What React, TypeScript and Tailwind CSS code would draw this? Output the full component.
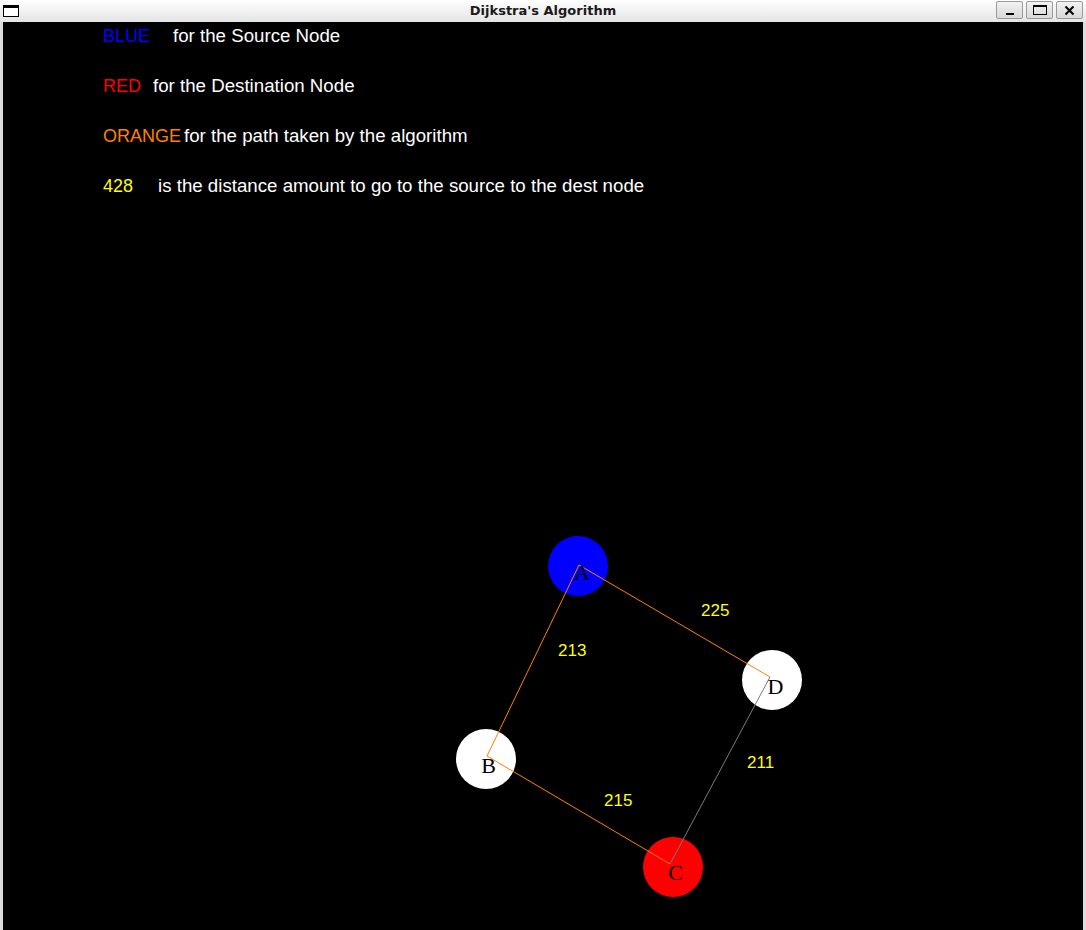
const nodes = [
  { id: "A", cx: 578, cy: 566, fill: "#0000ff", tx: 582, ty: 580 },
  { id: "B", cx: 486, cy: 759, fill: "#ffffff", tx: 488.5, ty: 773 },
  { id: "C", cx: 673, cy: 867, fill: "#ff0000", tx: 675.5, ty: 880 },
  { id: "D", cx: 772, cy: 680, fill: "#ffffff", tx: 775.5, ty: 694 },
];

// where the edges meet each node
const anchors: Record<string, [number, number]> = {
  A: [579, 565],
  B: [487, 756],
  C: [670, 864],
  D: [770, 677],
};

const edges = [
  { from: "A", to: "D", color: "#ff8000", label: "225", lx: 701, ly: 616 },
  { from: "A", to: "B", color: "#ff8000", label: "213", lx: 558, ly: 656 },
  { from: "B", to: "C", color: "#ff8000", label: "215", lx: 604, ly: 806 },
  { from: "D", to: "C", color: "#7a7a7a", label: "211", lx: 747, ly: 768 },
];

const legend = [
  { key: "BLUE", color: "text-[#0000ff]", width: "w-[70px]", text: "for the Source Node" },
  { key: "RED", color: "text-[#ff0000]", width: "w-[50px]", text: "for the Destination Node" },
  { key: "ORANGE", color: "text-[#ff8000]", width: "w-[81px]", text: "for the path taken by the algorithm" },
  { key: "428", color: "text-[#ffff00]", width: "w-[55px]", text: "is the distance amount to go to the source to the dest node" },
];

const TitleButton = ({ children }: { children: React.ReactNode }) => (
  <div className="w-[27px] h-[18px] border border-[#9a9a9a] rounded-[2px] bg-gradient-to-b from-[#f2f2f2] to-[#d9d9d9] flex items-center justify-center">
    {children}
  </div>
);

export default function App() {
  return (
    <div className="w-[1086px] h-[930px] flex flex-col bg-[#dcdcdc] overflow-hidden font-['Liberation_Sans',Arial,sans-serif]">
      <div className="h-[22px] shrink-0 relative flex items-center bg-gradient-to-b from-white to-[#e4e4e4]">
        <div className="ml-[3px] w-[16px] h-[12px] border border-black border-t-[3px] bg-white" />
        <div className="absolute inset-x-0 top-0 h-[22px] flex items-center justify-center text-[13px] font-bold text-[#1a1a1a] font-['DejaVu_Sans',sans-serif] pointer-events-none">
          Dijkstra's Algorithm
        </div>
        <div className="ml-auto mr-[3px] flex gap-[3px] self-start mt-[1px]">
          <TitleButton>
            <div className="w-[8px] h-[2px] bg-black mt-[8px]" />
          </TitleButton>
          <TitleButton>
            <div className="w-[14px] h-[10px] border border-black border-t-[2px]" />
          </TitleButton>
          <TitleButton>
            <svg width="11" height="11" viewBox="0 0 11 11">
              <path d="M1.5 1.5 L9.5 9.5 M9.5 1.5 L1.5 9.5" stroke="black" strokeWidth="2" />
            </svg>
          </TitleButton>
        </div>
      </div>

      <div className="flex-1 mx-[3px] bg-black relative">
        <div className="pt-[4px] pl-[100px] text-[18px] leading-[20px] text-white">
          {legend.map((row) => (
            <div key={row.key} className="h-[50px] flex whitespace-nowrap">
              <span className={`${row.color} ${row.width} shrink-0`}>{row.key}</span>
              <span className="text-[18.7px]">{row.text}</span>
            </div>
          ))}
        </div>

        <svg
          className="absolute inset-0"
          width="1080"
          height="908"
          viewBox="3 22 1080 908"
        >
          {nodes.map((n) => (
            <circle key={n.id} cx={n.cx} cy={n.cy} r="30" fill={n.fill} />
          ))}
          {edges.map((e) => {
            const [x1, y1] = anchors[e.from];
            const [x2, y2] = anchors[e.to];
            return (
              <line
                key={e.from + e.to}
                x1={x1}
                y1={y1}
                x2={x2}
                y2={y2}
                stroke={e.color}
                strokeWidth="1"
              />
            );
          })}
          {edges.map((e) => (
            <text
              key={e.label}
              x={e.lx}
              y={e.ly}
              fill="#ffff00"
              fontSize="17"
              fontFamily="'Liberation Sans', Arial, sans-serif"
            >
              {e.label}
            </text>
          ))}
          {nodes.map((n) => (
            <text
              key={n.id + "t"}
              x={n.tx}
              y={n.ty}
              textAnchor="middle"
              fill="#000000"
              fontSize="22"
              fontFamily="'Liberation Serif', 'Times New Roman', serif"
            >
              {n.id}
            </text>
          ))}
        </svg>
      </div>
    </div>
  );
}
